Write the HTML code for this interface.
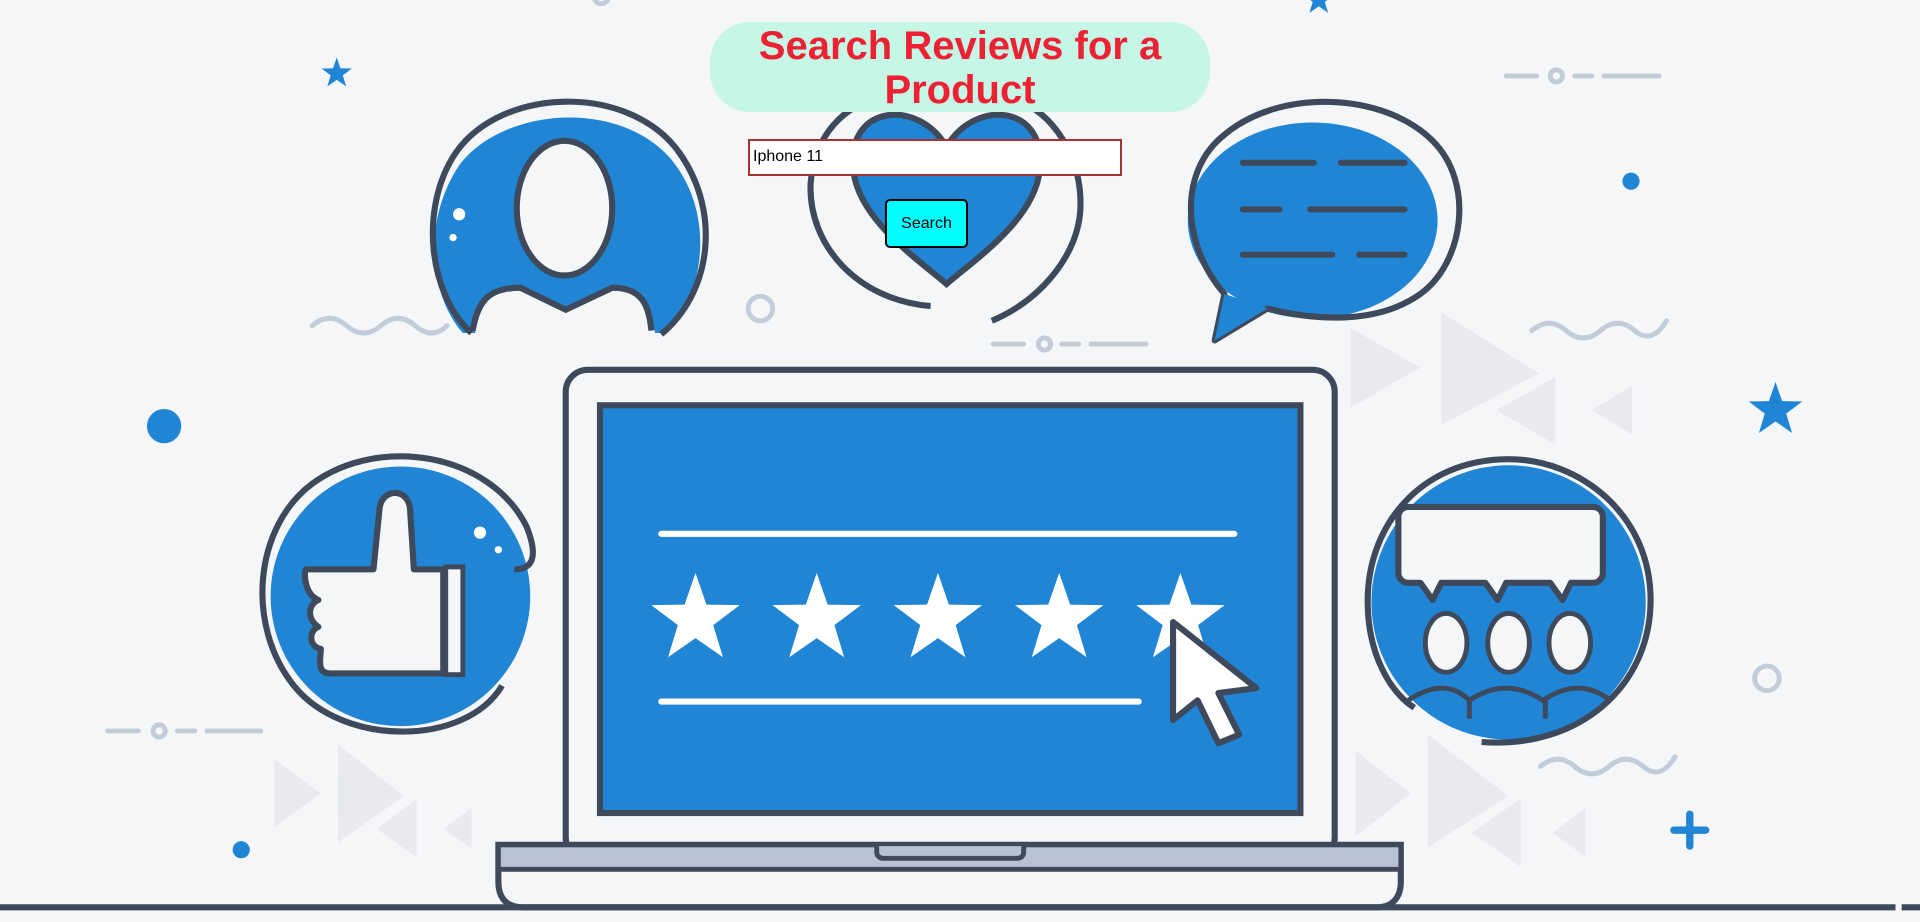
<!DOCTYPE html>
<html><head><meta charset="utf-8"><style>
html,body{margin:0;padding:0;width:1920px;height:922px;overflow:hidden;background:#f4f6f8;font-family:"Liberation Sans",Arial,sans-serif}
svg{position:absolute;left:0;top:0}
.title{position:absolute;left:710px;top:22px;width:500px;height:90px;background:#c5f6e6;border-radius:40px;color:#ec2234;font-weight:bold;font-size:40px;line-height:44px;text-align:center;padding-top:2px;box-sizing:border-box}
.inp{position:absolute;left:748px;top:139px;width:374px;height:37px;border:2px solid #a83232;background:#fff;box-sizing:border-box;font-size:16px;padding:7px 3px;color:#000}
.btn{position:absolute;left:885px;top:199px;width:83px;height:49px;background:#00ffff;border:2px solid #000;border-radius:5px;box-sizing:border-box;font-size:16px;text-align:center;line-height:45px;color:#000}
</style></head><body>
<svg width="1920" height="922" viewBox="0 0 1568 753" preserveAspectRatio="none">
<defs>
<symbol id="st" viewBox="-1 -1 2 2"><polygon points="0,-1 0.235,-0.32 0.95,-0.31 0.38,0.12 0.59,0.81 0,0.4 -0.59,0.81 -0.38,0.12 -0.95,-0.31 -0.235,-0.32" fill="currentColor"/></symbol>
</defs>
<g fill="#e8eaee">
<polygon points="1103,268 1160,300 1103,333"/><polygon points="1177,255 1257,305 1177,347"/><polygon points="1270,308 1270,363 1222,335"/><polygon points="1333,315 1333,355 1300,335"/>
<polygon points="224,620 262,648 224,676"/><polygon points="276,608 330,650 276,688"/><polygon points="340,653 340,700 308,677"/><polygon points="385,660 385,693 362,677"/>
<polygon points="1107,613 1152,648 1107,683"/><polygon points="1166,600 1232,650 1166,692"/><polygon points="1242,652 1242,708 1202,680"/><polygon points="1295,660 1295,700 1268,680"/>
</g>
<g stroke="#c3ccd9" stroke-width="4" fill="none" stroke-linecap="round">
<path d="M1230,62h25M1286,62h14M1310,62h45"/><circle cx="1271" cy="62" r="5"/>
<path d="M811,281h25M867,281h14M891,281h45"/><circle cx="853" cy="281" r="5"/>
<path d="M88,597h25M145,597h14M169,597h44"/><circle cx="130" cy="597" r="5"/>
<path d="M255,266q14,-12 28,0t28,0t28,0t26,0"/>
<path d="M1251,270q14,-12 28,0t28,0t28,0t26,-8"/>
<path d="M1258,626q14,-12 28,0t28,0t28,0t26,-8"/>
<circle cx="621" cy="252" r="10"/><circle cx="1443" cy="554" r="10"/><circle cx="491" cy="-3" r="6"/>
</g>
<g fill="#2185d5" color="#2185d5">
<use href="#st" x="262" y="47" width="26" height="26"/><use href="#st" x="1064" y="-13" width="26" height="26"/><use href="#st" x="1427" y="312" width="46" height="46"/>
<circle cx="1332" cy="148" r="7"/><circle cx="134" cy="348" r="14"/><circle cx="197" cy="694" r="7"/>
<rect x="1377" y="662" width="6" height="32" rx="3"/><rect x="1364" y="675" width="32" height="6" rx="3"/>
</g>
<!-- person -->
<path d="M378,272 C350,240 345,180 375,135 C410,88 505,80 548,130 C585,175 575,240 545,272 L535,272 C530,250 525,235 500,235 L462,253 L424,235 C400,235 392,250 388,272Z" fill="#2185d5"/>
<path d="M385,272 C350,240 342,170 372,125 C410,70 515,68 555,125 C590,175 580,240 540,273" fill="none" stroke="#3e4a5c" stroke-width="5"/>
<path d="M386,270 C390,245 400,235 425,235 L462,253 L500,235 C525,235 530,250 532,270" fill="none" stroke="#3e4a5c" stroke-width="5"/>
<ellipse cx="461" cy="170" rx="39" ry="55" fill="#f4f6f8" stroke="#3e4a5c" stroke-width="5"/>
<circle cx="375" cy="175" r="5" fill="#fff"/><circle cx="370" cy="194" r="3" fill="#fff"/>
<!-- heart -->
<path d="M773,120 C750,80 690,85 697,140 C702,180 750,212 773,232 C796,212 844,180 849,140 C856,85 796,80 773,120Z" fill="#2185d5" stroke="#3e4a5c" stroke-width="5"/>
<path d="M760,250 C700,245 660,200 662,150 C665,110 690,85 720,80 M826,80 C860,90 886,130 882,175 C878,210 850,245 810,262" fill="none" stroke="#3e4a5c" stroke-width="5"/>
<!-- speech -->
<ellipse cx="1072" cy="180" rx="102" ry="80" fill="#2185d5"/>
<path d="M1000,240 C965,200 962,140 1000,110 C1045,72 1130,75 1170,115 C1205,150 1195,215 1160,240 C1125,265 1075,262 1035,252 L992,278 Z" fill="none" stroke="#3e4a5c" stroke-width="5" stroke-linejoin="round"/>
<path d="M1000,240 L992,278 L1035,252 Z" fill="#2185d5"/>
<g stroke="#3e4a5c" stroke-width="5" stroke-linecap="round"><path d="M1015,133h58M1095,133h52M1015,171h30M1070,171h77M1015,208h73M1110,208h37"/></g>
<!-- thumbs -->
<circle cx="327" cy="487" r="106" fill="#2185d5"/>
<path d="M410,560 C380,610 280,610 240,560 C200,510 208,430 255,395 C310,355 400,370 430,430 C440,455 435,465 420,465" fill="none" stroke="#3e4a5c" stroke-width="5"/>
<path d="M250,465 L305,465 L310,415 C312,398 335,398 335,418 L338,465 L362,465 L362,550 L270,550 C258,550 262,538 262,530 C252,528 252,515 260,512 C250,505 252,493 260,490 C248,485 248,466 250,465Z" fill="#f4f6f8" stroke="#3e4a5c" stroke-width="5" stroke-linejoin="round"/>
<rect x="364" y="463" width="14" height="88" fill="#f4f6f8" stroke="#3e4a5c" stroke-width="4"/>
<circle cx="392" cy="435" r="5" fill="#fff"/><circle cx="407" cy="449" r="3" fill="#fff"/>
<!-- group -->
<circle cx="1232" cy="492" r="112" fill="#2185d5"/>
<path d="M1210,606 C1290,612 1348,560 1348,490 C1348,420 1290,375 1232,375 C1160,375 1115,430 1117,495 C1118,535 1135,565 1155,578" fill="none" stroke="#3e4a5c" stroke-width="5"/>
<path d="M1165,414 h136 a8,8 0 0 1 8,8 v46 a8,8 0 0 1 -8,8 h-18 l-7,14 l-10,-14 h-36 l-7,14 l-10,-14 h-36 l-7,14 l-10,-14 h-10 a8,8 0 0 1 -8,-8 v-46 a8,8 0 0 1 8,-8z" fill="#f4f6f8" stroke="#3e4a5c" stroke-width="5" stroke-linejoin="round"/>
<g fill="#f4f6f8" stroke="#3e4a5c" stroke-width="4"><ellipse cx="1181" cy="525" rx="17" ry="24"/><ellipse cx="1232" cy="525" rx="17" ry="24"/><ellipse cx="1282" cy="525" rx="17" ry="24"/></g>
<path d="M1150,572 q30,-20 50,0 q30,-20 60,0 q30,-20 55,0 M1200,572 v15 M1262,572 v15" fill="none" stroke="#3e4a5c" stroke-width="4"/>
<!-- laptop -->
<rect x="462" y="302" width="628" height="400" rx="18" fill="#f4f6f8" stroke="#3e4a5c" stroke-width="5"/>
<rect x="490" y="331" width="572" height="333" fill="#2185d5" stroke="#3e4a5c" stroke-width="5"/>
<g stroke="#fff" stroke-width="5" stroke-linecap="round"><path d="M540,436H1008M540,573H930"/></g>
<g color="#fff"><use href="#st" x="530" y="468" width="76" height="76"/><use href="#st" x="629" y="468" width="76" height="76"/><use href="#st" x="728" y="468" width="76" height="76"/><use href="#st" x="827" y="468" width="76" height="76"/><use href="#st" x="926" y="468" width="76" height="76"/></g>
<path d="M958,508 L1026,562 L995,566 L1012,600 L995,607 L978,572 L958,588 Z" fill="#fff" stroke="#3e4a5c" stroke-width="5" stroke-linejoin="round"/>
<path d="M407,690 H1144 V720 C1144,735 1135,741 1125,741 H427 C415,741 407,735 407,720 Z" fill="#f4f6f8" stroke="#3e4a5c" stroke-width="5"/>
<rect x="409" y="692" width="733" height="17" fill="#b7c3d4"/>
<path d="M407,710H1144" stroke="#3e4a5c" stroke-width="4"/>
<path d="M716,691 v5 a5,5 0 0 0 5,5 h110 a5,5 0 0 0 5,-5 v-5" fill="#b7c3d4" stroke="#3e4a5c" stroke-width="4"/>
<path d="M0,741H1548M1553,741H1568" stroke="#3e4a5c" stroke-width="5"/>
</svg>
<div class="title">Search Reviews for a<br>Product</div>
<div class="inp">Iphone 11</div>
<div class="btn">Search</div>
</body></html>
